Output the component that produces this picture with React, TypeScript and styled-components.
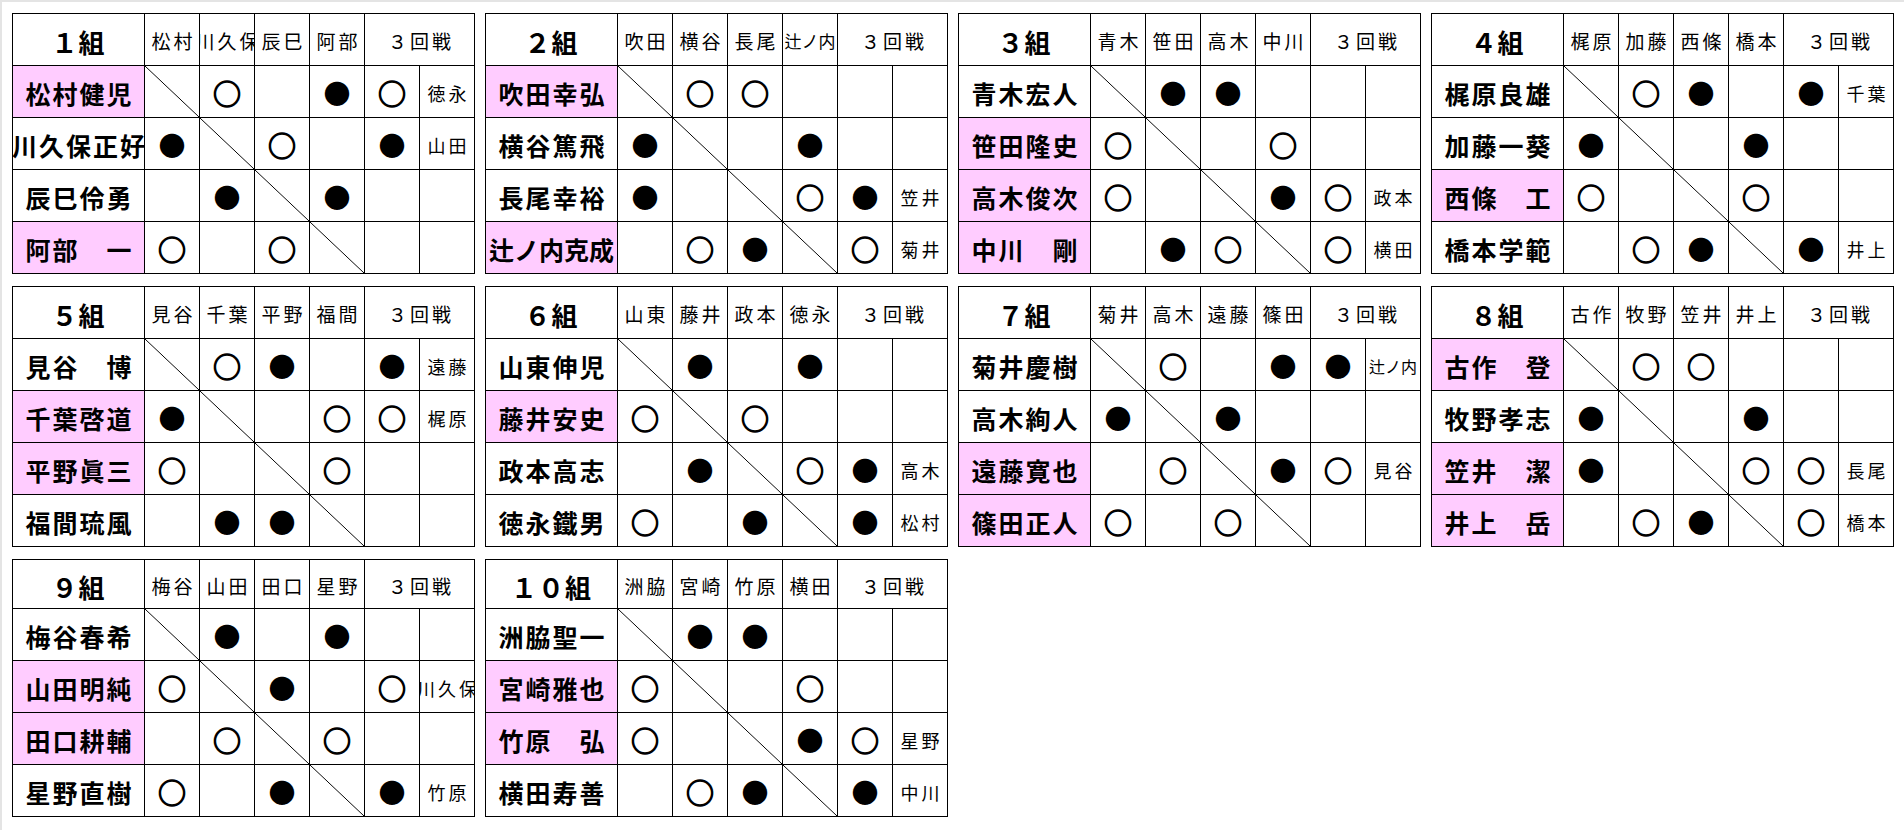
import { Fragment } from 'react';
import styled, { createGlobalStyle } from 'styled-components';

type Row = [string, boolean, string, string, string];

interface Group {
  label: string;
  heads: string[];
  rows: Row[];
}

// res: 4 chars, o = ○, b = ●, x = self (diagonal), . = empty
const groups: Group[] = [
  {
    label: '１組',
    heads: ['松村', '川久保', '辰巳', '阿部'],
    rows: [
      ['松村健児', true, 'xo.b', 'o', '徳永'],
      ['川久保正好', false, 'bxo.', 'b', '山田'],
      ['辰巳伶勇', false, '.bxb', '.', ''],
      ['阿部　一', true, 'o.ox', '.', ''],
    ],
  },
  {
    label: '２組',
    heads: ['吹田', '横谷', '長尾', '辻ノ内'],
    rows: [
      ['吹田幸弘', true, 'xoo.', '.', ''],
      ['横谷篤飛', false, 'bx.b', '.', ''],
      ['長尾幸裕', false, 'b.xo', 'b', '笠井'],
      ['辻ノ内克成', true, '.obx', 'o', '菊井'],
    ],
  },
  {
    label: '３組',
    heads: ['青木', '笹田', '高木', '中川'],
    rows: [
      ['青木宏人', false, 'xbb.', '.', ''],
      ['笹田隆史', true, 'ox.o', '.', ''],
      ['高木俊次', true, 'o.xb', 'o', '政本'],
      ['中川　剛', true, '.box', 'o', '横田'],
    ],
  },
  {
    label: '４組',
    heads: ['梶原', '加藤', '西條', '橋本'],
    rows: [
      ['梶原良雄', false, 'xob.', 'b', '千葉'],
      ['加藤一葵', false, 'bx.b', '.', ''],
      ['西條　工', true, 'o.xo', '.', ''],
      ['橋本学範', false, '.obx', 'b', '井上'],
    ],
  },
  {
    label: '５組',
    heads: ['見谷', '千葉', '平野', '福間'],
    rows: [
      ['見谷　博', false, 'xob.', 'b', '遠藤'],
      ['千葉啓道', true, 'bx.o', 'o', '梶原'],
      ['平野眞三', true, 'o.xo', '.', ''],
      ['福間琉風', false, '.bbx', '.', ''],
    ],
  },
  {
    label: '６組',
    heads: ['山東', '藤井', '政本', '徳永'],
    rows: [
      ['山東伸児', false, 'xb.b', '.', ''],
      ['藤井安史', true, 'oxo.', '.', ''],
      ['政本高志', false, '.bxo', 'b', '高木'],
      ['徳永鐵男', false, 'o.bx', 'b', '松村'],
    ],
  },
  {
    label: '７組',
    heads: ['菊井', '高木', '遠藤', '篠田'],
    rows: [
      ['菊井慶樹', false, 'xo.b', 'b', '辻ノ内'],
      ['高木絢人', false, 'bxb.', '.', ''],
      ['遠藤寛也', true, '.oxb', 'o', '見谷'],
      ['篠田正人', true, 'o.ox', '.', ''],
    ],
  },
  {
    label: '８組',
    heads: ['古作', '牧野', '笠井', '井上'],
    rows: [
      ['古作　登', true, 'xoo.', '.', ''],
      ['牧野孝志', false, 'bx.b', '.', ''],
      ['笠井　潔', true, 'b.xo', 'o', '長尾'],
      ['井上　岳', true, '.obx', 'o', '橋本'],
    ],
  },
  {
    label: '９組',
    heads: ['梅谷', '山田', '田口', '星野'],
    rows: [
      ['梅谷春希', false, 'xb.b', '.', ''],
      ['山田明純', true, 'oxb.', 'o', '川久保'],
      ['田口耕輔', true, '.oxo', '.', ''],
      ['星野直樹', false, 'o.bx', 'b', '竹原'],
    ],
  },
  {
    label: '１０組',
    heads: ['洲脇', '宮崎', '竹原', '横田'],
    rows: [
      ['洲脇聖一', false, 'xbb.', '.', ''],
      ['宮崎雅也', true, 'ox.o', '.', ''],
      ['竹原　弘', true, 'o.xb', 'o', '星野'],
      ['横田寿善', false, '.obx', 'b', '中川'],
    ],
  },
];

const mark = (c: string) => (c === 'o' ? '○' : c === 'b' ? '●' : '');

const isTight = (s: string) => s.includes('ノ');

const App = () => (
  <>
    <GlobalStyle />
    <Sheet>
      {groups.map((g, i) => (
        <Board key={g.label} $head={i >= 8 ? 49 : 52}>
          <GroupTitle>{g.label}</GroupTitle>
          {g.heads.map((h) => (
            <HeadCell key={h} $tight={isTight(h)}>
              {h}
            </HeadCell>
          ))}
          <RoundHead>３回戦</RoundHead>
          {g.rows.map(([name, pink, res, third, opp]) => (
            <Fragment key={name}>
              <NameCell $pink={pink} $tight={isTight(name)}>
                {name}
              </NameCell>
              {res.split('').map((c, j) =>
                c === 'x' ? (
                  <SelfCell key={j} />
                ) : (
                  <MarkCell key={j} $filled={c === 'b'}>
                    {mark(c)}
                  </MarkCell>
                )
              )}
              <MarkCell $filled={third === 'b'}>{mark(third)}</MarkCell>
              <OppCell $tight={isTight(opp)}>{opp}</OppCell>
            </Fragment>
          ))}
        </Board>
      ))}
    </Sheet>
  </>
);

/////////////////////////////////////////////////////////////////////////////////////////

const GlobalStyle = createGlobalStyle`
  * {
    box-sizing: border-box;
  }
  html,
  body {
    margin: 0;
    padding: 0;
    background: #ffffff;
  }
  body {
    font-family: "Noto Sans CJK JP", "Noto Sans", sans-serif;
    color: #000000;
  }
`;

const Sheet = styled.div`
  display: grid;
  grid-template-columns: repeat(4, max-content);
  align-content: start;
  column-gap: 10px;
  row-gap: 12px;
  padding: 11px 0 0 10px;
  min-height: 830px;
  border-top: 2px solid #e4e4e4;
  border-left: 2px solid #e4e4e4;
`;

const Board = styled.div<{ $head: number }>`
  display: grid;
  grid-template-columns: 132px repeat(6, 55px);
  grid-template-rows: ${(p) => p.$head}px repeat(4, 52px);
  border-top: 1px solid #000;
  border-left: 1px solid #000;
`;

const Cell = styled.div`
  display: flex;
  align-items: center;
  justify-content: center;
  overflow: hidden;
  white-space: nowrap;
  border-right: 1px solid #000;
  border-bottom: 1px solid #000;
  background: #ffffff;
  line-height: 1;
`;

const GroupTitle = styled(Cell)`
  font-size: 26px;
  font-weight: 700;
  letter-spacing: 1px;
  padding-top: 5px;
`;

const HeadCell = styled(Cell)<{ $tight?: boolean }>`
  font-size: ${(p) => (p.$tight ? '17px' : '19px')};
  letter-spacing: ${(p) => (p.$tight ? '0' : '3px')};
  padding: 2px 0 0 ${(p) => (p.$tight ? '0' : '3px')};
`;

const RoundHead = styled(HeadCell)`
  grid-column: span 2;
`;

const NameCell = styled(Cell)<{ $pink?: boolean; $tight?: boolean }>`
  font-size: 25px;
  font-weight: 700;
  letter-spacing: ${(p) => (p.$tight ? '0' : '2px')};
  padding: 3px 0 0 ${(p) => (p.$tight ? '0' : '2px')};
  background: ${(p) => (p.$pink ? '#ffccff' : '#ffffff')};
`;

const MarkCell = styled(Cell)<{ $filled?: boolean }>`
  font-size: ${(p) => (p.$filled ? '27px' : '28px')};
  padding-top: 2px;
  -webkit-text-stroke: ${(p) => (p.$filled ? '0' : '1.3px #000')};
`;

const SelfCell = styled(Cell)`
  background: linear-gradient(
    to top right,
    transparent calc(50% - 0.7px),
    #000 50%,
    transparent calc(50% + 0.7px)
  );
`;

const OppCell = styled(HeadCell)`
  font-size: ${(p) => (p.$tight ? '16px' : '18px')};
`;

export default App;
